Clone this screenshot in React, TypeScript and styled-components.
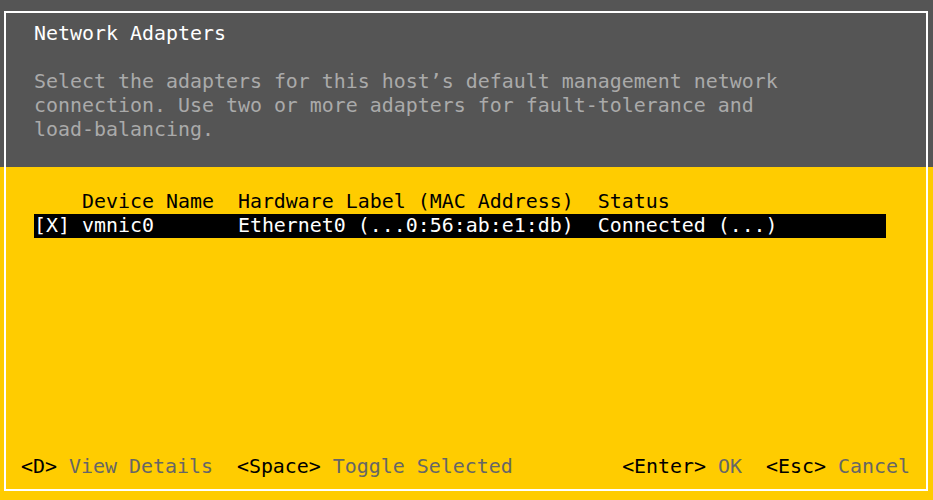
import React from 'react';
import styled, { createGlobalStyle } from 'styled-components';

const Global = createGlobalStyle`
  html, body { margin: 0; padding: 0; background: #ffcc00; }
  body { width: 933px; height: 500px; overflow: hidden; }
`;

const Screen = styled.div`
  width: 933px;
  height: 500px;
  display: flex;
  flex-direction: column;
  font-family: "DejaVu Sans Mono", "Liberation Mono", monospace;
  font-size: 19.93px;
  line-height: 24px;
`;

const TopBand = styled.header`
  background: #555555;
  height: 167px;
  box-sizing: border-box;
  padding: 11px 5px 0 4px;
  display: flex;
`;

const FrameTop = styled.div`
  flex: 1;
  border: 2px solid #ffffff;
  border-bottom: none;
  padding: 9px 28px 0;
`;

const Title = styled.h1`
  margin: 0;
  font: inherit;
  color: #ffffff;
`;

const Description = styled.p`
  margin: 24px 0 0;
  color: #aaaaaa;
  max-width: 63ch;
`;

const BottomBand = styled.main`
  flex: 1;
  background: #ffcc00;
  padding: 0 5px 9px 4px;
  display: flex;
`;

const FrameBottom = styled.div`
  flex: 1;
  border: 2px solid #ffffff;
  border-top: none;
  display: flex;
  flex-direction: column;
  padding: 23px 0 10px;
`;

const Table = styled.div`
  margin-left: 28px;
  width: 71ch;
  white-space: pre;
`;

const Row = styled.div<{ $selected?: boolean }>`
  display: grid;
  grid-template-columns: 17ch 30ch 24ch;
  height: 24px;
  background: ${(p) => (p.$selected ? '#000000' : 'transparent')};
  color: ${(p) => (p.$selected ? '#ffffff' : '#000000')};
`;

const Cell = styled.span<{ $indent?: number }>`
  padding-left: ${(p) => p.$indent ?? 0}ch;
`;

const Footer = styled.footer`
  margin-top: auto;
  display: flex;
  justify-content: space-between;
  padding: 0 16px 0 15px;
  white-space: pre;
`;

const FooterGroup = styled.div`
  display: flex;
  gap: 2ch;
`;

const FooterItem = styled.div`
  display: flex;
  gap: 1ch;
`;

const Key = styled.span`
  color: #000000;
`;

const Label = styled.span`
  color: #666666;
`;

const Action = ({ k, label }: { k: string; label: string }) => (
  <FooterItem>
    <Key>{k}</Key>
    <Label>{label}</Label>
  </FooterItem>
);

export default function App() {
  return (
    <>
      <Global />
      <Screen>
        <TopBand>
          <FrameTop>
            <Title>Network Adapters</Title>
            <Description>
              Select the adapters for this host’s default management network connection. Use two or
              more adapters for fault-tolerance and load-balancing.
            </Description>
          </FrameTop>
        </TopBand>
        <BottomBand>
          <FrameBottom>
            <Table>
              <Row>
                <Cell $indent={4}>Device Name</Cell>
                <Cell>Hardware Label (MAC Address)</Cell>
                <Cell>Status</Cell>
              </Row>
              <Row $selected>
                <Cell>[X] vmnic0</Cell>
                <Cell>Ethernet0 (...0:56:ab:e1:db)</Cell>
                <Cell>Connected (...)</Cell>
              </Row>
            </Table>
            <Footer>
              <FooterGroup>
                <Action k="<D>" label="View Details" />
                <Action k="<Space>" label="Toggle Selected" />
              </FooterGroup>
              <FooterGroup>
                <Action k="<Enter>" label="OK" />
                <Action k="<Esc>" label="Cancel" />
              </FooterGroup>
            </Footer>
          </FrameBottom>
        </BottomBand>
      </Screen>
    </>
  );
}
